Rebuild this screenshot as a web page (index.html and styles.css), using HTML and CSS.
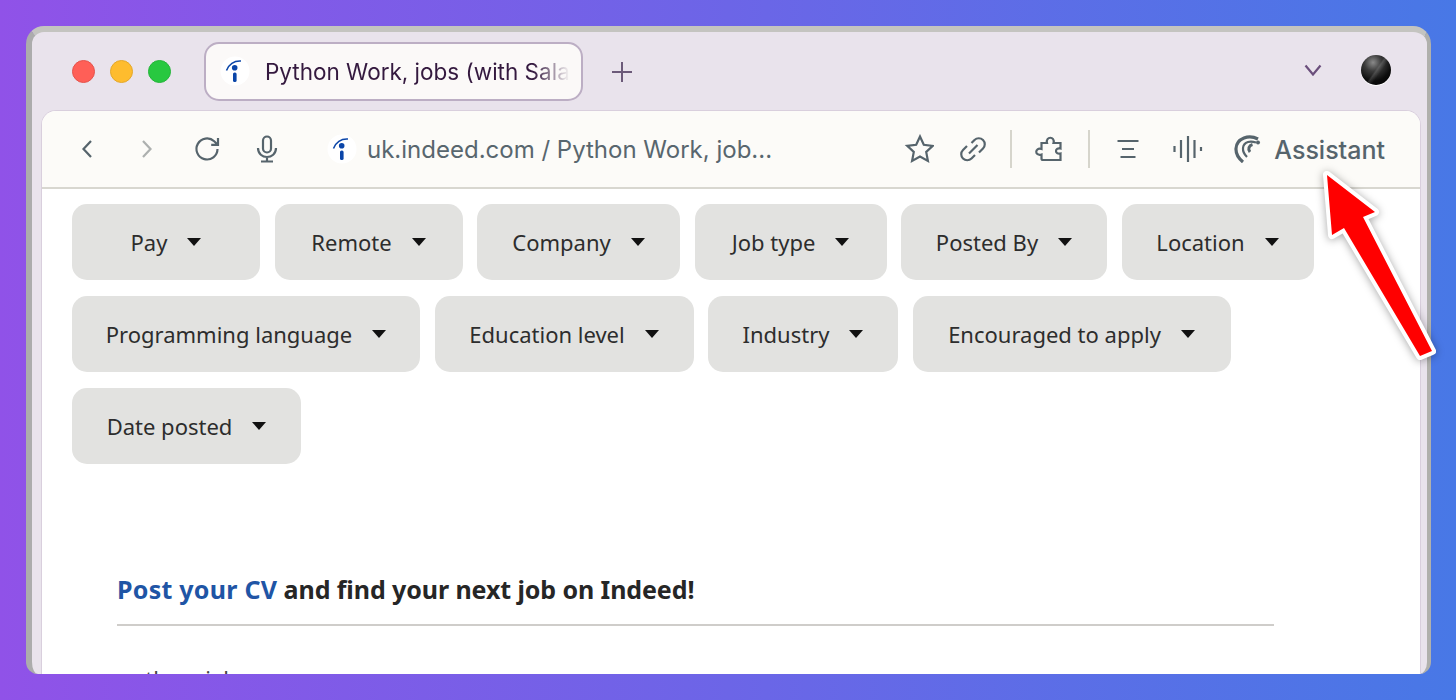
FILE: index.html
```html
<!DOCTYPE html>
<html lang="en">
  <head>
    <meta charset="UTF-8" />
    <meta name="viewport" content="width=device-width, initial-scale=1.0" />
    <title>Python Work, jobs</title>
    <link rel="stylesheet" href="styles.css">
  </head>
  <body>
    <div class="window">
      <div class="tabbar">
        <div class="lights">
          <span class="light red"></span>
          <span class="light yellow"></span>
          <span class="light green"></span>
        </div>
        <div class="tab">
          <svg class="favicon" viewBox="0 0 30 30">
            <circle cx="15" cy="15" r="14.5" fill="#fff" />
            <path d="M6.5 14.5C8.5 8.5 14 4.5 21 5" fill="none" stroke="#0a45a8" stroke-width="1.5" />
            <circle cx="14.7" cy="11.8" r="2.8" fill="#0a45a8" />
            <rect x="13" y="16.5" width="3.6" height="9.5" rx="1.6" fill="#0a45a8" />
          </svg>
          <span class="tab-title">Python Work, jobs (with Sala</span>
        </div>
        <svg class="new-tab" viewBox="0 0 22 22"><path d="M11 1v20M1 11h20" /></svg>
        <div class="tabbar-right">
          <svg class="tab-menu" viewBox="0 0 18 12"><path d="M1.5 1.5l7.5 9 7.5-9" /></svg>
          <div class="avatar"></div>
        </div>
      </div>
      <div class="viewport">
        <div class="toolbar">
          <div class="nav">
            <svg class="icon" viewBox="0 0 30 30"><path d="M19 7l-7.5 8 7.5 8" /></svg>
            <svg class="icon dim" viewBox="0 0 30 30"><path d="M11 7l7.5 8-7.5 8" /></svg>
            <svg class="icon" viewBox="0 0 30 30"><path d="M25.5 15a10.5 10.5 0 1 1-3.3-7.7L25.5 10.5M26 4v6.8h-6.8" /></svg>
            <svg class="icon" viewBox="0 0 30 30"><rect x="11" y="2.5" width="8" height="16" rx="4" /><path d="M6 14c0 12 18 12 18 0M15 23v4.5M9 27.5h12" /></svg>
          </div>
          <div class="address">
            <svg class="favicon" viewBox="0 0 30 30">
              <circle cx="15" cy="15" r="14.5" fill="#fff" />
              <path d="M6.5 14.5C8.5 8.5 14 4.5 21 5" fill="none" stroke="#0a45a8" stroke-width="1.5" />
              <circle cx="14.7" cy="11.8" r="2.8" fill="#0a45a8" />
              <rect x="13" y="16.5" width="3.6" height="9.5" rx="1.6" fill="#0a45a8" />
            </svg>
            <span class="url">uk.indeed.com / Python Work, job...</span>
          </div>
          <div class="tools">
            <svg class="icon" viewBox="-1 0 30 30"><path d="M15 2.5l3.8 8.3 9 1.1-6.6 6.1 1.7 8.9L15 22.5l-7.9 4.4 1.7-8.9-6.6-6.1 9-1.1z" /></svg>
            <svg class="icon" viewBox="-1 0 30 30"><path d="M13.5 9l3-3a6 6 0 0 1 8.5 8.5l-4 4M17 21l-3.5 3.5A6 6 0 0 1 5 16l4-4M11 19.5l8.5-8.5" /></svg>
            <span class="divider"></span>
            <svg class="icon" viewBox="1.5 0 30 30"><path d="M8 9h5.5c-1.8-7 8.5-7 6.500 0H27v5.500c-6-1.500-6 6.500 0 5V26H9.500A1.500 1.500 0 0 1 8 24.500v-4c-7 2-7-7.500 0-5.500z" /></svg>
            <span class="divider"></span>
            <svg class="icon" viewBox="0 0 30 30"><path d="M4.5 7h21M9 15h12M7.5 23h15" /></svg>
            <svg class="icon wave" viewBox="0 0 30 30"><path d="M1.5 12v6M8 6v18M15 2v26M21.5 6v18M28 13v4" /></svg>
            <div class="assistant">
              <svg class="assistant-icon" viewBox="0 0 28 28">
                <path d="M10 27C0 19 1 7 11 3c4-1.5 9-1.5 14 1" stroke-width="3.2" />
                <path d="M14 22C8 16 9 9 15 7c2.5-.8 5-.5 8 .5" stroke-width="2.2" />
                <path d="M17 17c-2.5-3-1-6.5 2.5-7.5" stroke-width="3" />
                <circle cx="25" cy="7.5" r="2" />
              </svg>
              <span class="assistant-label">Assistant</span>
            </div>
          </div>
        </div>
        <div class="page">
          <div class="filters">
            <button class="chip w188">Pay<i></i></button>
            <button class="chip w188">Remote<i></i></button>
            <button class="chip w203">Company<i></i></button>
            <button class="chip w192">Job type<i></i></button>
            <button class="chip w206">Posted By<i></i></button>
            <button class="chip w192">Location<i></i></button>
            <button class="chip">Programming language<i></i></button>
            <button class="chip w259">Education level<i></i></button>
            <button class="chip w190">Industry<i></i></button>
            <button class="chip w318">Encouraged to apply<i></i></button>
            <button class="chip w229">Date posted<i></i></button>
          </div>
          <div class="promo">
            <h2><a href="#">Post your CV</a> and find your next job on Indeed!</h2>
            <hr />
            <p>other vial</p>
          </div>
        </div>
      </div>
      <span class="edge-mark"></span>
    </div>
    <svg class="arrow" viewBox="0 0 1456 700">
      <path d="M1327 175L1375 212 1363 217 1432 351 1420 356 1344 228 1332 235z" />
    </svg>
  </body>
</html>
```

FILE: styles.css
```css
html,
body {
  height: 100%;
}
body {
  margin: 0;
  padding: 26px 25px 26px 26px;
  box-sizing: border-box;
  overflow: hidden;
  background: linear-gradient(90deg, #9052e8 0%, #4878e6 100%);
  font-family: "Inter", "Liberation Sans", sans-serif;
}
.window {
  position: relative;
  height: 648px;
  box-sizing: border-box;
  background-color: #e9e3ec;
  border-style: solid;
  border-color: #c4c4c0 #b0b0ac #c4c4c0 #acacac;
  border-width: 6px 4px 0 6px;
  border-radius: 18px 18px 12px 12px;
  overflow: hidden;
  padding: 0 6px 0 9px;
  display: flex;
  flex-direction: column;
}
.edge-mark {
  position: absolute;
  right: -3px;
  top: 496px;
  width: 2px;
  height: 27px;
  background-color: #30303a;
}

/* tab strip */
.tabbar {
  height: 78px;
  flex: none;
  display: flex;
  align-items: center;
}
.lights {
  display: flex;
  gap: 15px;
  margin-left: 31px;
  width: 132px;
}
.light {
  width: 23px;
  height: 23px;
  border-radius: 50%;
  box-sizing: border-box;
}
.red {
  background-color: #ff5f57;
  border: 1px solid #e5534c;
}
.yellow {
  background-color: #febc2e;
  border: 1px solid #e4a82a;
}
.green {
  background-color: #28c840;
  border: 1px solid #25b53a;
}
.tab {
  width: 379px;
  height: 59px;
  box-sizing: border-box;
  background-color: #fbf9f8;
  border: 2px solid #bcaec4;
  border-radius: 15px;
  display: flex;
  align-items: center;
  padding-left: 14px;
  gap: 15px;
  overflow: hidden;
}
.favicon {
  width: 30px;
  height: 30px;
  flex: none;
}
.tab-title {
  font-size: 22.5px;
  color: #34193f;
  white-space: nowrap;
  overflow: hidden;
  -webkit-mask-image: linear-gradient(90deg, #000 88%, transparent 100%);
  mask-image: linear-gradient(90deg, #000 88%, transparent 100%);
}
.new-tab {
  width: 22px;
  height: 22px;
  margin: 2px 0 0 28px;
  fill: none;
  stroke: #6c5a79;
  stroke-width: 2;
}
.tabbar-right {
  margin-left: auto;
  display: flex;
  align-items: center;
  gap: 39px;
  padding-right: 30px;
  margin-bottom: 3px;
}
.tab-menu {
  width: 18px;
  height: 12px;
  fill: none;
  stroke: #6b4f7c;
  stroke-width: 2.2;
}
.avatar {
  width: 30px;
  height: 30px;
  border-radius: 50%;
  background:
    linear-gradient(125deg, transparent 48%, rgba(255, 255, 255, 0.14) 52%, transparent 62%),
    radial-gradient(circle at 40% 25%, #8a8a8a 0%, #3a3a3a 30%, #0c0c0c 64%, #000 100%);
  box-shadow: 0 1px 0 #fff;
}

/* toolbar + page */
.viewport {
  flex: 1;
  min-height: 0;
  background-color: #fff;
  border: solid #d9cfdd;
  border-width: 1px 1px 0 1px;
  border-radius: 15px 15px 0 0;
  overflow: hidden;
  display: flex;
  flex-direction: column;
}
.toolbar {
  height: 76px;
  flex: none;
  background-color: #fcfbf8;
  border-bottom: 2px solid #d8d7d0;
  display: flex;
  align-items: center;
  padding: 0 35px 0 30px;
}
.icon {
  width: 30px;
  height: 30px;
  flex: none;
  fill: none;
  stroke: #56646c;
  stroke-width: 2.2;
}
.dim {
  stroke: #adb0af;
}
.nav {
  display: flex;
  gap: 30px;
}
.address {
  display: flex;
  align-items: center;
  gap: 10px;
  margin-left: 45px;
}
.url {
  font-size: 24px;
  color: #58666e;
  white-space: nowrap;
  padding-top: 1px;
}
.tools {
  margin-left: auto;
  display: flex;
  align-items: center;
  gap: 23px;
}
.divider {
  width: 2px;
  height: 38px;
  background-color: #d6d5cc;
}
.wave {
  margin-left: 7px;
}
.assistant {
  display: flex;
  align-items: center;
  gap: 13px;
  margin-left: 7px;
  font-size: 25px;
  font-weight: 500;
  color: #56646c;
}
.assistant-label {
  padding-top: 2px;
}
.assistant-icon {
  width: 28px;
  height: 28px;
  fill: none;
  stroke: #56646c;
}
.assistant-icon circle {
  fill: #56646c;
  stroke: none;
}
.page {
  flex: 1;
  min-height: 0;
  padding: 15px 30px 0 30px;
  overflow: hidden;
}
.filters {
  display: flex;
  flex-wrap: wrap;
  gap: 16px 14.5px;
}
.chip {
  height: 76px;
  padding: 0;
  min-width: 348px;
  border: none;
  border-radius: 15px;
  background-color: #e2e2e0;
  color: #2d2d2d;
  font-family: "Noto Sans", sans-serif;
  font-size: 22px;
  display: flex;
  align-items: center;
  justify-content: center;
}
.chip i {
  width: 0;
  height: 0;
  margin-left: 20px;
  border-top: 8px solid #111;
  border-left: 7px solid transparent;
  border-right: 7px solid transparent;
}
.w188 {
  min-width: 188px;
}
.w190 {
  min-width: 190px;
}
.w192 {
  min-width: 192px;
}
.w203 {
  min-width: 203px;
}
.w206 {
  min-width: 206px;
}
.w229 {
  min-width: 229px;
}
.w259 {
  min-width: 259px;
}
.w318 {
  min-width: 318px;
}
.promo {
  margin: 108px 116px 0 45px;
}
.promo h2 {
  margin: 0;
  font-family: "Noto Sans", sans-serif;
  font-size: 25px;
  font-weight: 700;
  letter-spacing: -0.09px;
  color: #262626;
}
.promo a {
  color: #1f55a5;
  letter-spacing: 0.25px;
  text-decoration: none;
}
.promo hr {
  margin: 18px 0 0;
  border: none;
  border-top: 2px solid #cfcdca;
}
.promo p {
  margin: 37px 0 0 15px;
  font-family: "Noto Sans", sans-serif;
  font-size: 22px;
  color: #444;
}

/* annotation over everything */
.arrow {
  position: absolute;
  left: 0;
  top: 0;
  width: 1456px;
  height: 700px;
  fill: #ff0000;
  stroke: #fff;
  stroke-width: 8;
  stroke-linejoin: round;
  paint-order: stroke;
  filter: drop-shadow(0 1px 4px rgba(0, 0, 0, 0.35));
}
```
